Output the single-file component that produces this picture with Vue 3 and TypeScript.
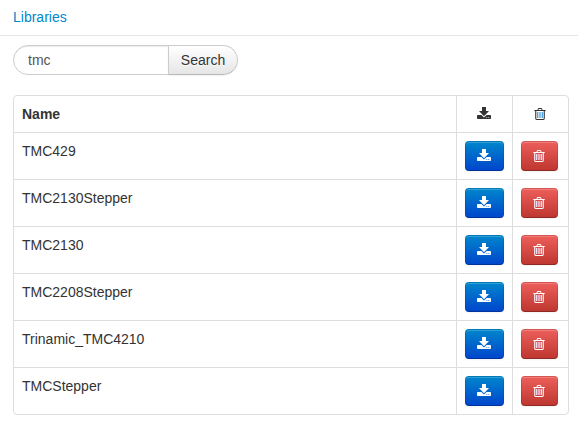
<script setup lang="ts">
import { ref, computed } from 'vue'

const query = ref<string>('tmc')
const libraries = ref<string[]>([
  'TMC429',
  'TMC2130Stepper',
  'TMC2130',
  'TMC2208Stepper',
  'Trinamic_TMC4210',
  'TMCStepper',
])
const term = ref<string>('tmc')
const results = computed<string[]>(() =>
  libraries.value.filter((name) => name.toLowerCase().includes(term.value.toLowerCase())),
)

function search(): void {
  term.value = query.value
}

function remove(name: string): void {
  libraries.value = libraries.value.filter((item) => item !== name)
}

const downloadPath =
  'M5 0h4v4h3L7 9.2 2 4h3zM.8 8h3.6L7 10.4 9.6 8h3.6q.8 0 .8.8v2.4q0 .8-.8.8H.8q-.8 0-.8-.8V8.8q0-.8.8-.8zM9.3 10v.8h.9V10zM11.3 10v.8h.9V10z'
const lidPath = 'M.3 2H3.4L4 .6Q4.200 0 4.800 0h2.400q.6 0 .8.600L8.600 2h3.100v1H.3zM4.400 2h3.200L7.200 1H4.800z'
const binPath = 'M1.200 3h1.100v7.500q0 .5.5.5h6.400q.5 0 .5-.5V3h1.100v7.600q0 1.400-1.400 1.400H2.600q-1.400 0-1.400-1.400z'
const ribPath = 'M3 4h1.400v6H3zM5.300 4h1.400v6H5.300zM7.600 4H9v6H7.600z'
</script>

<template>
  <main class="page">
    <header class="heading"><a class="link">Libraries</a></header>
    <form class="search" @submit.prevent="search">
      <input v-model="query" class="query" type="text" />
      <button class="submit" type="submit">Search</button>
    </form>
    <section class="table">
      <div class="row head">
        <div class="cell">Name</div>
        <div class="cell action">
          <svg class="icon download" viewBox="0 0 14 12"><path fill-rule="evenodd" :d="downloadPath" /></svg>
        </div>
        <div class="cell action">
          <svg class="icon trash" viewBox="0 0 12 12">
            <path class="ribs" :d="ribPath" />
            <path :d="binPath" />
            <path fill-rule="evenodd" :d="lidPath" />
          </svg>
        </div>
      </div>
      <div v-for="name in results" :key="name" class="row">
        <div class="cell">{{ name }}</div>
        <div class="cell">
          <button class="btn primary" type="button">
            <svg class="icon download" viewBox="0 0 14 12"><path fill-rule="evenodd" :d="downloadPath" /></svg>
          </button>
        </div>
        <div class="cell">
          <button class="btn danger" type="button" @click="remove(name)">
            <svg class="icon trash" viewBox="0 0 12 12">
              <path class="ribs" :d="ribPath" />
              <path :d="binPath" />
              <path fill-rule="evenodd" :d="lidPath" />
            </svg>
          </button>
        </div>
      </div>
    </section>
  </main>
</template>

<style>
body {
  margin: 0;
  background: #fff;
}
</style>

<style scoped>
.page {
  font: 14px/20px "Liberation Sans", Arial, sans-serif;
  color: #333;
}
.heading {
  box-sizing: border-box;
  height: 36px;
  padding: 7px 13px 8px;
  border-bottom: 1px solid #e5e5e5;
}
.link {
  color: #0088cc;
}
.search {
  display: flex;
  height: 30px;
  margin: 9px 13px 20px;
}
.query,
.submit {
  box-sizing: border-box;
  height: 30px;
  margin: 0;
  border: 1px solid #ccc;
  font: inherit;
  outline: none;
}
.query {
  width: 156px;
  padding: 4px 14px;
  color: #555;
  background: #fff;
  border-radius: 15px 0 0 15px;
  box-shadow: inset 0 1px 1px rgba(0, 0, 0, 0.075);
}
.submit {
  width: 70px;
  margin-left: -1px;
  padding: 4px 0;
  color: #333;
  text-align: center;
  text-shadow: 0 1px 1px rgba(255, 255, 255, 0.75);
  background: linear-gradient(#fff, #e6e6e6);
  border-bottom-color: #b8b8b8;
  border-radius: 0 15px 15px 0;
  box-shadow: inset 0 1px 0 rgba(255, 255, 255, 0.2), 0 1px 2px rgba(0, 0, 0, 0.05);
}
.table {
  box-sizing: border-box;
  width: 556px;
  margin-left: 13px;
  border: 1px solid #ddd;
  border-radius: 4px;
}
.row {
  display: grid;
  grid-template-columns: 442px 56px 56px;
}
.row + .row {
  border-top: 1px solid #ddd;
}
.cell {
  padding: 8px;
}
.cell + .cell {
  border-left: 1px solid #ddd;
}
.head {
  font-weight: bold;
}
.action {
  padding-left: 12px;
}
.action .icon {
  margin: 3px 0 0 8px;
}
.action .trash {
  margin: 4px 0 0 9px;
}
.icon {
  display: block;
  flex: none;
  height: 12px;
  fill: currentColor;
}
.download {
  width: 14px;
}
.trash {
  width: 12px;
}
.ribs {
  fill: #5aa5e0;
}
.btn {
  display: flex;
  box-sizing: border-box;
  align-items: flex-start;
  height: 30px;
  margin: 0;
  padding: 7px 0 0 11px;
  color: #fff;
  border: 1px solid;
  border-color: rgba(0, 0, 0, 0.1) rgba(0, 0, 0, 0.1) rgba(0, 0, 0, 0.25);
  border-radius: 4px;
  background-origin: border-box;
  box-shadow: inset 0 1px 0 rgba(255, 255, 255, 0.2), 0 1px 2px rgba(0, 0, 0, 0.05);
}
.btn .trash {
  margin-top: 1px;
}
.btn .ribs {
  fill: #f4d9f2;
}
.primary {
  width: 39px;
  background-image: linear-gradient(#0088cc, #0044cc);
}
.danger {
  width: 37px;
  background-image: linear-gradient(#ee5f5b, #bd362f);
}
</style>
